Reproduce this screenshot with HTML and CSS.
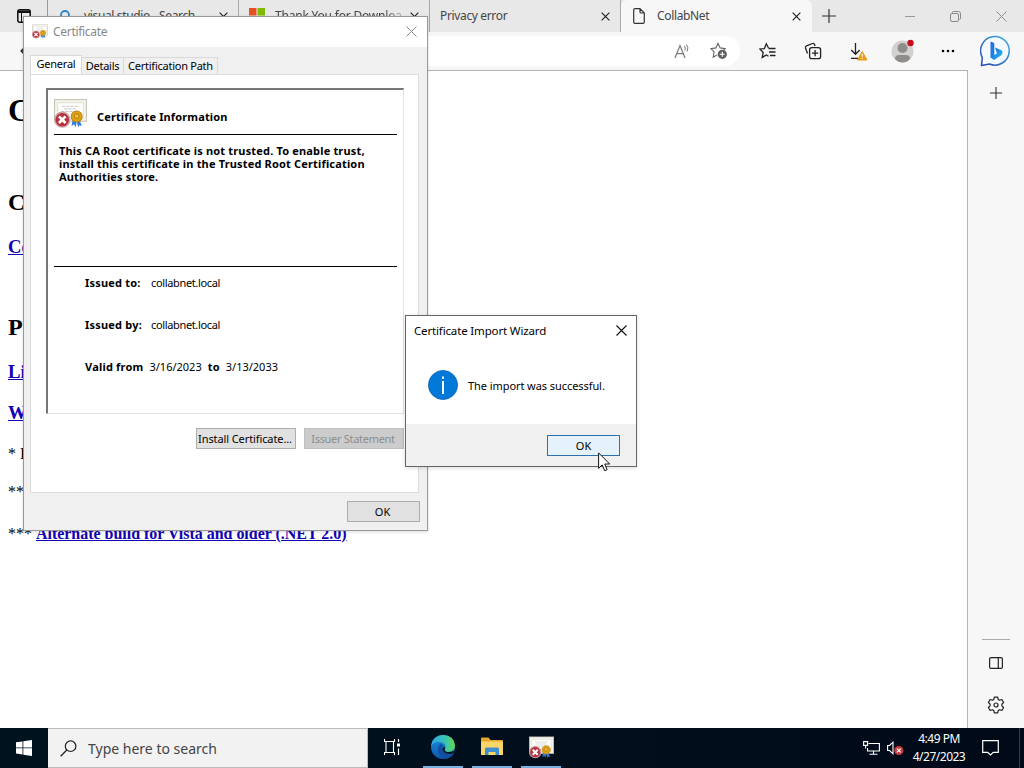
FILE: index.html
```html
<!DOCTYPE html>
<html lang="en">

<head>
    <meta charset="UTF-8">
    <meta name="viewport" content="width=device-width, initial-scale=1.0">
    <title>CollabNet</title>
    <link rel="stylesheet" href="styles.css">
</head>

<body>
    <!-- shared icons -->
    <svg width="0" height="0" class="defs">
        <symbol id="cert" viewBox="0 0 32 28">
            <rect x=".5" y=".5" width="31" height="21" fill="#f3f3ea" stroke="#c6c4b8"/>
            <rect x="3.500" y="3.500" width="25" height="15" fill="#fdfdfb" stroke="#e4e2d6"/>
            <path d="M8 7h16M10 9.500h12M7 12h13" stroke="#bbb" stroke-width=".8" stroke-dasharray="3 1"/>
            <path d="M18.500 18l-1.500 8 2.500-1.500 1.500 3 1.500-8zM24 18l3 8-2.500-.5-1 2-2-8z" fill="#2f7de0"/>
            <circle cx="22" cy="17" r="5.300" fill="#e0a312" stroke="#b9841a"/>
            <circle cx="22" cy="16.500" r="2.300" fill="#f0bb35" stroke="#b98010"/>
            <circle cx="8" cy="20" r="7.200" fill="#b9333f" stroke="#c9a3a6" stroke-width="1.300"/>
            <path d="M4.800 16.800l6.400 6.400M11.200 16.800l-6.400 6.400" stroke="#fff" stroke-width="2.600"/>
        </symbol>
        <symbol id="close" viewBox="0 0 10 10">
            <path d="M.7.7l8.600 8.600M9.300.7L.7 9.300" fill="none" stroke="currentColor" stroke-width="1.300"/>
        </symbol>
        <linearGradient id="bingFill" x1="0" y1="0" x2="1" y2="1">
            <stop offset="0" stop-color="#2a66e8"/>
            <stop offset=".5" stop-color="#1687e6"/>
            <stop offset="1" stop-color="#35c6f0"/>
        </linearGradient>
        <linearGradient id="bingRing" x1="1" y1="0" x2="0" y2="1">
            <stop offset="0" stop-color="#39b4de"/>
            <stop offset="1" stop-color="#2b46b4"/>
        </linearGradient>
        <linearGradient id="edgeTop" x1="0" y1="0" x2="1" y2="0">
            <stop offset="0" stop-color="#2ba7e8"/>
            <stop offset=".6" stop-color="#38c5b0"/>
            <stop offset="1" stop-color="#63d84c"/>
        </linearGradient>
        <linearGradient id="edgeBody" x1="0" y1="0" x2="0" y2="1">
            <stop offset="0" stop-color="#1f8fe0"/>
            <stop offset="1" stop-color="#0d56a8"/>
        </linearGradient>
    </svg>

    <div class="browser">
        <div class="tabbar">
            <div class="tab-actions">
                <svg width="14" height="14" viewBox="0 0 14 14"><rect x=".8" y=".8" width="12.400" height="12.400" rx="2" fill="none" stroke="#111" stroke-width="1.500"/><path d="M1 1.500h12v2.500H1z" fill="#111"/><path d="M4.500 4v9" stroke="#111"/></svg>
            </div>
            <div class="tab">
                <svg class="favicon" width="16" height="16" viewBox="0 0 16 16"><circle cx="7" cy="7" r="4" fill="none" stroke="#2b86c9" stroke-width="1.800"/><path d="M9.500 10L14 14.500" stroke="#2b86c9" stroke-width="2"/></svg>
                <span class="tab-title">visual studio - Search</span>
                <svg class="tab-x"><use href="#close"/></svg>
            </div>
            <div class="tab">
                <svg class="favicon" width="16" height="16" viewBox="0 0 16 16"><path d="M0 0h7.500v7.500H0z" fill="#e8501f"/><path d="M8.500 0H16v7.500H8.500z" fill="#7fba00"/><path d="M0 8.500h7.500V16H0z" fill="#00a4ef"/><path d="M8.500 8.500H16V16H8.500z" fill="#ffb900"/></svg>
                <span class="tab-title fade">Thank You for Downloa</span>
                <svg class="tab-x"><use href="#close"/></svg>
            </div>
            <div class="tab">
                <span class="tab-title">Privacy error</span>
                <svg class="tab-x"><use href="#close"/></svg>
            </div>
            <div class="tab active">
                <svg class="favicon page-icon" width="12" height="16" viewBox="0 0 12 16"><path d="M2 .7h5l4.300 4.300v9q0 1.300-1.300 1.300H2Q.7 15.300.7 14V2Q.7.7 2 .7zM7 .7V4q0 1 1 1h3.300" fill="none" stroke="#333" stroke-width="1.200"/></svg>
                <span class="tab-title">CollabNet</span>
                <svg class="tab-x"><use href="#close"/></svg>
            </div>
            <div class="new-tab">
                <svg width="14" height="14" viewBox="0 0 14 14"><path d="M7 0v14M0 7h14" stroke="#333" stroke-width="1.200"/></svg>
            </div>
            <div class="win-buttons">
                <svg width="10" height="10"><path d="M0 5.500h10" stroke="#999"/></svg>
                <svg width="11" height="11" viewBox="0 0 11 11"><rect x=".5" y="2.500" width="8" height="8" rx="1.500" fill="none" stroke="#888"/><path d="M2.500 2.500V1.500q0-1 1-1H8.500q2 0 2 2v5q0 1-1 1" fill="none" stroke="#888"/></svg>
                <svg width="11" height="11" viewBox="0 0 11 11"><path d="M.5.5l10 10M10.500.5l-10 10" stroke="#8c8c8c"/></svg>
            </div>
        </div>

        <div class="toolbar">
            <div class="back">
                <svg width="14" height="12" viewBox="0 0 14 12"><path d="M14 6H1M6 1L1 6l5 5" fill="none" stroke="#222" stroke-width="1.200"/></svg>
            </div>
            <div class="address">
                <svg width="18" height="16" viewBox="0 0 18 16"><path d="M1 15L6 2.500 11 15M2.800 10.700h6.400" fill="none" stroke="#777" stroke-width="1.200"/><path d="M10.500 3q1.500 2 .3 4.500M12.500 1.500q2.500 3 .5 7" fill="none" stroke="#777"/></svg>
                <svg width="18" height="18" viewBox="0 0 18 18"><path d="M7 13l-3.800 2.200.9-5.300L.9 6.600l5-.7L8 1.400l2.200 4.500 5 .7-1.500 1.600" fill="none" stroke="#666" stroke-width="1.100"/><circle cx="12.300" cy="12.300" r="4.600" fill="#5e5e5e"/><path d="M12.300 9.800v5M9.800 12.300h5" stroke="#fff" stroke-width="1.100"/></svg>
            </div>
            <div class="tool">
                <svg width="18" height="18" viewBox="0 0 18 18"><path d="M9.500 6L7.300 1.800 5.400 6.600.8 7l3.400 3.500-1 5L7.300 13l2.200 1.300" fill="none" stroke="#222" stroke-width="1.300"/><path d="M9.500 6.500h7M10 10h6.500M11 13.500h5.500" stroke="#222" stroke-width="1.300"/></svg>
            </div>
            <div class="tool">
                <svg width="18" height="18" viewBox="0 0 18 18"><path d="M3.500 11.500L1.500 6Q1 4.500 2.500 3.800L8.500 1.500Q10 1 10.600 2.500L11 4" fill="none" stroke="#222" stroke-width="1.300"/><rect x="5.600" y="5.600" width="11" height="11" rx="2.200" fill="#f7f7f7" stroke="#222" stroke-width="1.300"/><path d="M11.100 8v6.200M8 11.100h6.200" stroke="#222" stroke-width="1.300"/></svg>
            </div>
            <div class="tool">
                <svg width="20" height="20" viewBox="0 0 20 20"><path d="M7.500 2v11M3.300 9l4.200 4.300L11.700 9M3 17.300h7" fill="none" stroke="#222" stroke-width="1.300"/><path d="M14.200 10.500L19 19H9.500z" fill="#e89b17" stroke="#e89b17" stroke-linejoin="round"/><path d="M14.200 12.800v3M14.200 16.800v1.200" stroke="#fff" stroke-width="1.200"/></svg>
            </div>
            <div class="tool">
                <svg width="24" height="24" viewBox="0 0 24 24"><circle cx="11.500" cy="12.500" r="11" fill="#d3d1cf"/><circle cx="11.500" cy="9" r="5" fill="#8f8d8b"/><path d="M4 20q0-4 4-4h7q4 0 4 4-3.500 3.500-7.500 3.500T4 20z" fill="#8f8d8b"/><circle cx="19.500" cy="4" r="3.200" fill="#c50f1f"/></svg>
            </div>
            <div class="tool">
                <svg width="14" height="4" viewBox="0 0 14 4"><circle cx="2" cy="2" r="1.300"/><circle cx="7" cy="2" r="1.300"/><circle cx="12" cy="2" r="1.300"/></svg>
            </div>
            <div class="tool bing">
                <svg width="32" height="32" viewBox="0 0 32 32"><path d="M1.500 30.500L2.300 22.500A14.300 14.300 0 1 1 9.500 29z" fill="#f4faff" stroke="url(#bingRing)" stroke-width="1.500" stroke-linejoin="round"/><path d="M10.500 6.500l3.800 1.500v12.500l-3.800 2.500zM15 12.500l7 3q1.300 3-1 5L14 25l-3.500-2.500 6.500-4z" fill="url(#bingFill)"/></svg>
            </div>
        </div>

        <div class="main">
            <div class="page">
                <h1>C</h1>
                <h2>C</h2>
                <h3><a>Co</a></h3>
                <h2 class="second">P</h2>
                <h3><a>Li</a></h3>
                <h3><a>W</a></h3>
                <p>* <b>I</b></p>
                <p>**</p>
                <p class="last">*** <b><a>Alternate build for Vista and older (.NET 2.0)</a></b></p>
            </div>
            <div class="sidebar">
                <svg width="12" height="12" viewBox="0 0 12 12"><path d="M6 0v12M0 6h12" stroke="#333" stroke-width="1.100"/></svg>
                <div class="sidebar-bottom">
                    <svg width="14" height="12" viewBox="0 0 14 12"><rect x=".6" y=".6" width="12.800" height="10.800" rx="1.500" fill="none" stroke="#222" stroke-width="1.200"/><path d="M9.300 0v12" stroke="#222" stroke-width="1.200"/></svg>
                    <svg width="18" height="18" viewBox="0 0 18 18"><path d="M7.300 1.200h3.400l.5 2.300 1.400.8 2.300-.8 1.700 3-1.700 1.700v1.600l1.700 1.700-1.700 3-2.300-.8-1.400.8-.5 2.300H7.300l-.5-2.300-1.400-.8-2.300.8-1.700-3 1.700-1.700V8.200L1.400 6.500l1.700-3 2.300.8 1.400-.8z" fill="none" stroke="#222" stroke-width="1.200" stroke-linejoin="round"/><circle cx="9" cy="9" r="2" fill="none" stroke="#222" stroke-width="1.200"/></svg>
                </div>
            </div>
        </div>
    </div>

    <div class="window certificate">
        <div class="titlebar">
            <svg width="16" height="15"><use href="#cert"/></svg>
            <span>Certificate</span>
            <svg class="win-x" width="11" height="11" viewBox="0 0 11 11"><path d="M.5.5l10 10M10.500.5l-10 10" stroke="#888"/></svg>
        </div>
        <div class="sheet-tabs">
            <div class="sheet-tab selected">General</div>
            <div class="sheet-tab details">Details</div>
            <div class="sheet-tab path">Certification Path</div>
        </div>
        <div class="sheet">
            <div class="info">
                <div class="info-head">
                    <svg width="33" height="29"><use href="#cert"/></svg>
                    <b>Certificate Information</b>
                </div>
                <div class="info-text">
                    <div>This CA Root certificate is not trusted. To enable trust,</div>
                    <div>install this certificate in the Trusted Root Certification</div>
                    <div>Authorities store.</div>
                </div>
                <div class="fields">
                    <div class="field"><b>Issued to:</b><span>collabnet.local</span></div>
                    <div class="field"><b>Issued by:</b><span>collabnet.local</span></div>
                    <div class="field valid"><b>Valid from</b><span>3/16/2023</span><b>to</b><span>3/13/2033</span></div>
                </div>
            </div>
            <div class="sheet-buttons">
                <div class="btn">Install Certificate...</div>
                <div class="btn disabled">Issuer Statement</div>
            </div>
        </div>
        <div class="window-footer">
            <div class="btn">OK</div>
        </div>
    </div>

    <div class="window wizard">
        <div class="wizard-title">
            <span>Certificate Import Wizard</span>
            <svg width="11" height="11" viewBox="0 0 11 11"><path d="M.5.5l10 10M10.500.5l-10 10" stroke="#111" stroke-width="1.100"/></svg>
        </div>
        <div class="wizard-body">
            <svg width="30" height="30" viewBox="0 0 30 30"><circle cx="15" cy="15" r="14.600" fill="#0078d7" stroke="#0a5fae" stroke-width=".7"/><path d="M14 11h2V24h-2zM14 6.500h2v2.200h-2z" fill="#fff"/></svg>
            <span>The import was successful.</span>
        </div>
        <div class="wizard-footer">
            <div class="btn focus">OK</div>
        </div>
    </div>

    <svg class="cursor" width="13" height="20" viewBox="0 0 13 20"><path d="M.6.900v15.500l3.600-3.500 2.500 5.800 2.400-1-2.400-5.700h5z" fill="#fff" stroke="#111"/></svg>

    <div class="taskbar">
        <div class="start">
            <svg width="16" height="16" viewBox="0 0 16 16"><path d="M0 2.300L6.500 1.400v6.100H0zM7.300 1.300L16 0v7.500H7.300zM0 8.300h6.500v6.200L0 13.600zM7.300 8.300H16V16l-8.700-1.300z" fill="#fff"/></svg>
        </div>
        <div class="search">
            <svg width="17" height="17" viewBox="0 0 17 17"><circle cx="10.600" cy="6.200" r="5.300" fill="none" stroke="#222" stroke-width="1.200"/><path d="M6.800 10L.7 16.200" stroke="#222" stroke-width="1.300"/></svg>
            <span>Type here to search</span>
        </div>
        <div class="task view">
            <svg width="17" height="16" viewBox="0 0 17 16"><path d="M.5 0v2.500h10V0M.5 16v-2.500h10V16M2 2.500v11M9.500 2.500v11" fill="none" stroke="#fff" stroke-width="1.100"/><path d="M14.500 0v3M14.500 9.500V16" stroke="#fff" stroke-width="1.200"/><path d="M13 4.500h3v3h-3z" fill="#fff"/></svg>
        </div>
        <div class="task open">
            <svg width="24" height="24" viewBox="0 0 24 24"><circle cx="12" cy="12" r="12" fill="url(#edgeBody)"/><path d="M.1 10.500Q2 0 12 0q11 .5 12 10.500 0 6.500-7 6.500-4 0-3-2.500 1.500-3.500-1-6Q6 4 .1 10.500z" fill="url(#edgeTop)"/><path d="M8.500 9.500Q5 16 9.500 20.500q2 2.500 5.500 3.200Q22 22 23 17.500 17 21 12.500 17q-3-3-.5-6.500-1.500-2-3.500-1z" fill="#1150a0"/><path d="M13 11.500q1.500 1.500.8 3.500-.6 1.700 3.200 2 3.500.2 5.800-1.500L22.500 18q-5 2-9-.5-4-3-.5-6z" fill="#04141f"/></svg>
        </div>
        <div class="task open">
            <svg width="22" height="20" viewBox="0 0 22 20"><path d="M0 1.500Q0 .5 1 .5h6.500L9.500 3H21q1 0 1 1v14H0z" fill="#e5a82b"/><path d="M0 4.500h22V18H0z" fill="#fbd568"/><path d="M4 18v-6q0-1.500 1.500-1.500h11Q18 10.500 18 12v6h-3.500v-3h-7v3z" fill="#3e8fcc"/></svg>
        </div>
        <div class="task open">
            <svg width="25" height="23"><use href="#cert"/></svg>
        </div>
        <div class="tray">
            <svg width="17" height="14" viewBox="0 0 17 14"><path d="M5.500 2.500h10.900v7.500H4.500V7M10.500 10v3M6.500 13.300h8" fill="none" stroke="#fff" stroke-width="1.100"/><path d="M.6.600h4v3.800h-4zM2.600 4.500v3" fill="none" stroke="#fff" stroke-width="1.100"/></svg>
            <svg class="volume" width="17" height="15" viewBox="0 0 17 15"><path d="M.6 4.500h2L6 1.200v11.600L2.600 9.500h-2z" fill="none" stroke="#fff" stroke-width="1.100"/><circle cx="11.800" cy="9.500" r="4.600" fill="#c63a3f"/><path d="M9.900 7.600l3.800 3.800M13.700 7.600l-3.800 3.800" stroke="#fff" stroke-width="1.200"/></svg>
            <div class="clock">
                <div>4:49 PM</div>
                <div>4/27/2023</div>
            </div>
            <svg class="notice" width="17" height="16" viewBox="0 0 17 16"><path d="M.7.700h15.600v11.600h-5L8.500 15l-2.800-2.700h-5z" fill="none" stroke="#fff" stroke-width="1.200"/></svg>
        </div>
    </div>
</body>

</html>
```

FILE: styles.css
```css
* {
    box-sizing: border-box;
}

body {
    margin: 0;
    width: 1024px;
    height: 768px;
    overflow: hidden;
    position: relative;
    display: flex;
    flex-direction: column;
    font-family: "Noto Sans", "Open Sans", sans-serif;
    font-size: 12px;
    color: #000;
}

svg {
    display: block;
    flex: none;
}

.defs {
    position: absolute;
}

/* browser */
.browser {
    height: 728px;
    display: flex;
    flex-direction: column;
    background-color: #f7f7f7;
}

.tabbar {
    height: 32px;
    display: flex;
    background-color: #e8e8e8;
    color: #444;
}

.tab-actions {
    width: 48px;
    padding: 9px 0 0 17px;
    border-right: 1px solid #999;
}

.tab {
    width: 191px;
    display: flex;
    align-items: center;
    padding: 0 10px;
    border-right: 1px solid #aaa;
}

.favicon {
    margin-right: 10px;
}

.tab-title {
    flex: 1;
    white-space: nowrap;
    letter-spacing: -0.35px;
    padding-bottom: 1px;
}

.fade {
    -webkit-mask-image: linear-gradient(to right, #000 80%, transparent);
    mask-image: linear-gradient(to right, #000 80%, transparent);
    letter-spacing: -0.2px;
}

.tab-x {
    width: 9px;
    height: 9px;
    color: #222;
}

.tab.active {
    background-color: #f7f7f7;
    border: none;
    border-radius: 6px 6px 0 0;
    padding: 0 11px 0 12px;
}

.page-icon {
    margin-right: 12px;
}

.new-tab {
    padding: 9px 0 0 10px;
}

.win-buttons {
    margin-left: auto;
    display: flex;
    align-items: center;
    gap: 35px;
    padding-right: 17px;
}

.toolbar {
    height: 38px;
    display: flex;
    align-items: center;
}

.back {
    width: 112px;
    padding-left: 20px;
}

.address {
    flex: 1;
    height: 30px;
    margin-right: 5px;
    padding-right: 12px;
    border-radius: 15px;
    background-color: #fff;
    display: flex;
    justify-content: flex-end;
    align-items: center;
    gap: 18px;
}

.tool {
    width: 45px;
    display: flex;
    justify-content: center;
}

.bing {
    width: 54px;
    padding-right: 2px;
}

.main {
    flex: 1;
    display: flex;
}

/* web page */
.page {
    width: 968px;
    padding: 21px 8px 0;
    background-color: #fff;
    border-top: 1px solid #b4b4b4;
    border-right: 1px solid #b4b4b4;
    font-family: "Liberation Serif", serif;
    font-size: 16px;
}

.page h1 {
    margin: 0 0 61px;
    font-size: 32px;
    line-height: 36px;
}

.page h2 {
    margin: 0 0 20px;
    font-size: 24px;
    line-height: 27px;
}

.page h3 {
    margin: 0 0 20px;
    font-size: 18.72px;
    line-height: 21px;
}

.page h2.second {
    margin-top: 57px;
}

.page p {
    margin: 0 0 20px;
    line-height: 18px;
}

.page h3 + p {
    margin-top: 22px;
}

.page p.last {
    margin-top: 24px;
    letter-spacing: -0.02px;
}

.page a {
    color: #1200b4;
    text-decoration: underline;
}

.sidebar {
    width: 56px;
    display: flex;
    flex-direction: column;
    align-items: center;
    padding-top: 17px;
}

.sidebar-bottom {
    margin-top: auto;
    width: 28px;
    height: 89px;
    padding-top: 17px;
    border-top: 1px solid #aaa;
    display: flex;
    flex-direction: column;
    align-items: center;
    gap: 27px;
}

/* dialogs */
.window {
    position: absolute;
    display: flex;
    flex-direction: column;
    background-color: #f0f0f0;
    font-size: 11px;
}

.certificate {
    left: 23px;
    top: 16px;
    width: 405px;
    height: 515px;
    border: 1px solid #999;
    box-shadow: 0 1px 3px rgba(0, 0, 0, 0.15);
}

.titlebar {
    height: 30px;
    display: flex;
    align-items: center;
    padding: 0 10px 2px 8px;
    background-color: #fff;
    font-size: 12px;
    letter-spacing: -0.3px;
    color: #888;
}

.titlebar span {
    margin-left: 5px;
}

.titlebar .win-x {
    margin-left: auto;
}

.sheet-tabs {
    display: flex;
    align-items: flex-end;
    height: 27px;
    padding-left: 6px;
}

.sheet-tab {
    height: 17px;
    line-height: 15px;
    text-align: center;
    border: 1px solid #d9d9d9;
    border-left: none;
    border-bottom: none;
    white-space: nowrap;
    letter-spacing: -0.25px;
}

.sheet-tab.selected {
    width: 52px;
    height: 19px;
    line-height: 16px;
    border-left: 1px solid #d9d9d9;
    background-color: #fff;
}

.details {
    width: 42px;
}

.path {
    width: 94px;
}

.sheet {
    width: 389px;
    height: 419px;
    margin-left: 6px;
    padding: 13px 14px 0 15px;
    border: 1px solid #dcdcdc;
    background-color: #fff;
}

.info {
    height: 326px;
    padding: 9px 6px 0;
    border: 1px solid #e3e3e3;
    border-top: 2px solid #777;
    border-left: 2px solid #777;
}

.info-head {
    display: flex;
    height: 36px;
    gap: 10px;
    border-bottom: 1px solid #000;
}

.info-head b {
    margin-top: 10px;
    letter-spacing: 0.13px;
}

.info-text {
    height: 132px;
    padding: 9px 0 0 5px;
    border-bottom: 1px solid #000;
    font-weight: bold;
    line-height: 13px;
    letter-spacing: 0.17px;
    white-space: nowrap;
}

.fields {
    padding: 8px 0 0 31px;
}

.field {
    display: flex;
    height: 42px;
    line-height: 15px;
}

.field b {
    width: 66px;
    letter-spacing: 0.2px;
}

.field span {
    letter-spacing: -0.35px;
}

.field.valid b {
    width: auto;
}

.field.valid span {
    margin: 0 6px;
    letter-spacing: 0;
}

.sheet-buttons {
    display: flex;
    justify-content: flex-end;
    gap: 8px;
    margin-top: 14px;
}

.btn {
    width: 73px;
    height: 21px;
    padding-right: 2px;
    line-height: 19px;
    text-align: center;
    border: 1px solid #adadad;
    background-color: #e1e1e1;
    white-space: nowrap;
}

.sheet-buttons .btn {
    width: 100px;
    letter-spacing: -0.1px;
}

.btn.disabled {
    background-color: #ccc;
    border-color: #bfbfbf;
    color: #8c8c8c;
    letter-spacing: -0.3px;
}

.window-footer {
    display: flex;
    justify-content: flex-end;
    padding: 8px 7px 0 0;
}

.wizard {
    left: 405px;
    top: 315px;
    width: 232px;
    height: 152px;
    border: 1px solid #666;
    box-shadow: 0 1px 4px rgba(0, 0, 0, 0.15);
}

.wizard-title {
    height: 30px;
    display: flex;
    align-items: center;
    justify-content: space-between;
    padding: 0 9px 2px 8px;
    background-color: #fff;
    font-size: 11.5px;
    letter-spacing: -0.15px;
}

.wizard-body {
    height: 78px;
    display: flex;
    align-items: center;
    gap: 10px;
    padding-left: 22px;
    background-color: #fff;
    letter-spacing: -0.07px;
}

.wizard-footer {
    display: flex;
    justify-content: flex-end;
    padding: 11px 16px 0 0;
}

.btn.focus {
    padding-right: 0;
    border-color: #2a73b0;
    background-color: #e5f1fb;
}

.cursor {
    position: absolute;
    left: 598px;
    top: 452px;
}

/* taskbar */
.taskbar {
    height: 40px;
    display: flex;
    background: linear-gradient(to right, #00131f, #010a18);
}

.start {
    width: 48px;
    padding: 12px 0 0 16px;
}

.search {
    width: 320px;
    display: flex;
    align-items: center;
    gap: 11px;
    padding-left: 12px;
    border: 1px solid #bbb;
    border-left: none;
    background-color: #f2f2f2;
    font-size: 14px;
    color: #444;
}

.task {
    width: 40px;
    margin-left: 9px;
    display: flex;
    align-items: center;
    justify-content: center;
    border-bottom: 2px solid transparent;
}

.task.view {
    width: 46px;
    margin-left: 0;
    padding-left: 2px;
}

.task.open {
    border-bottom-color: #76b0e0;
}

.tray {
    margin-left: auto;
    display: flex;
    align-items: center;
    width: 157px;
    margin-right: 4px;
    border-right: 1px solid #333c48;
    color: #fff;
}

.volume {
    margin-left: 7px;
}

.clock {
    width: 60px;
    margin-left: 5px;
    line-height: 18px;
    text-align: center;
    letter-spacing: -0.5px;
}

.notice {
    margin-left: 13px;
}
```
